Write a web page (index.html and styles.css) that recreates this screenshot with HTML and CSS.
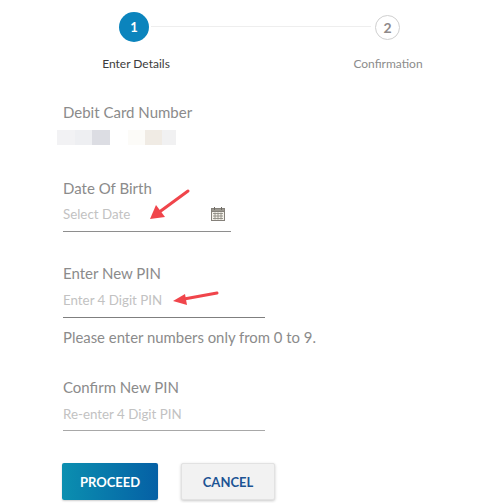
FILE: index.html
```html
<!DOCTYPE html>
<html lang="en">
<head>
<meta charset="utf-8">
<title>Set PIN</title>
<link rel="stylesheet" href="styles.css">
</head>
<body>
<main class="page">
  <div class="stepper">
    <div class="step step-active">
      <div class="dot-slot"><span class="dot dot-on">1</span></div>
      <span class="step-label">Enter Details</span>
    </div>
    <div class="step-line"></div>
    <div class="step step-next">
      <div class="dot-slot"><span class="dot dot-off">2</span></div>
      <span class="step-label">Confirmation</span>
    </div>
  </div>

  <section class="card-field">
    <div class="label">Debit Card Number</div>
    <div class="masked">
      <div class="mask-group">
        <i class="m m1"></i><i class="m m2"></i><i class="m m3"></i>
      </div>
      <div class="mask-group">
        <i class="m m4"></i><i class="m m5"></i><i class="m m6"></i>
      </div>
    </div>
  </section>

  <section class="field field-dob">
    <div class="label">Date Of Birth</div>
    <div class="input input-short">
      <span class="placeholder">Select Date</span>
      <svg class="cal" width="16" height="16" viewBox="0 0 16 16" aria-hidden="true">
        <rect x="1.5" y="2.5" width="13" height="12" fill="#f4f1ea" stroke="#85817a"/>
        <rect x="1.5" y="2.5" width="13" height="3" fill="#9b9890" stroke="#85817a"/>
        <path d="M4.5 1v3M11.500 1v3" stroke="#6f6c66" fill="none"/>
        <path d="M3 7.500h10M3 10h10M3 12.500h10M5 6.500v7M8 6.500v7M11 6.500v7" stroke="#8f8c85" stroke-width=".9" fill="none"/>
      </svg>
      <svg class="arrow arrow-dob" width="44" height="36" viewBox="0 0 44 36" aria-hidden="true">
        <path d="M41 3 11 25" stroke="#f0454b" stroke-width="3" stroke-linecap="round" fill="none"/>
        <path d="M3 31 9 17l9 12z" fill="#f0454b"/>
      </svg>
    </div>
  </section>

  <section class="field field-pin">
    <div class="label">Enter New PIN</div>
    <div class="input input-long">
      <span class="placeholder">Enter 4 Digit PIN</span>
      <svg class="arrow arrow-pin" width="48" height="18" viewBox="0 0 48 18" aria-hidden="true">
        <path d="M46 3 13 9" stroke="#f0454b" stroke-width="3" stroke-linecap="round" fill="none"/>
        <path d="M2 11 14 4l2 11z" fill="#f0454b"/>
      </svg>
    </div>
    <p class="hint">Please enter numbers only from 0 to 9.</p>
  </section>

  <section class="field field-confirm">
    <div class="label">Confirm New PIN</div>
    <div class="input input-long input-light">
      <span class="placeholder">Re-enter 4 Digit PIN</span>
    </div>
  </section>

  <div class="actions">
    <button class="btn btn-primary" type="button">PROCEED</button>
    <button class="btn btn-secondary" type="button">CANCEL</button>
  </div>
</main>
</body>
</html>
```
FILE: styles.css
```css
* { box-sizing: border-box; }
html, body { margin: 0; padding: 0; background: #fff; }
body { font-family: Lato, "Open Sans", sans-serif; color: #8a8a8a; height: 503px; overflow: hidden; }
.page { width: 500px; padding: 12px 0 0 63px; }

.stepper { display: flex; align-items: flex-start; height: 69px; margin-left: 39px; width: 320px; }
.step { width: 68px; flex: none; display: flex; flex-direction: column; align-items: center; }
.dot-slot { height: 30px; display: flex; align-items: center; justify-content: center; margin-bottom: 15px; }
.step-active .dot-slot { margin-right: 4px; }
.step-next .dot-slot { margin-right: 1px; }
.dot { display: flex; align-items: center; justify-content: center; border-radius: 50%; font-weight: 700; }
.dot-on { width: 30px; height: 30px; background: #0b84bd; color: #fff; font-size: 13px; }
.dot-off { width: 25px; height: 25px; border: 1px solid #cfcfcf; color: #8f8a8a; font-size: 14px; background: #fff; }
.step-label { font-size: 12px; line-height: 14px; white-space: nowrap; }
.step-active .step-label { color: #3c3c3c; }
.step-next .step-label { color: #8c8c8c; }
.step-line { flex: 1; height: 1px; margin: 14px -17px 0 -19px; background: #eeeeee; }

.label { font-size: 15px; line-height: 18px; color: #8b8b8b; }
.card-field { margin-top: 22px; }
.masked { display: flex; gap: 18px; margin: 9px 0 0 -6px; }
.mask-group { display: flex; }
.m { display: block; height: 15px; }
.m1 { width: 18px; background: #f2f2f4; }
.m2 { width: 17px; background: #eeeff2; }
.m3 { width: 18px; background: #dcdde3; }
.m4 { width: 17px; background: #fcfbf8; }
.m5 { width: 17px; background: #f0ebe4; }
.m6 { width: 14px; background: #f1f1f2; }

.field-dob { margin-top: 34px; }
.field-pin { margin-top: 32px; }
.field-confirm { margin-top: 32px; }

.input { position: relative; display: flex; align-items: center; justify-content: space-between; border-bottom: 1px solid #8e8e8e; }
.input-short { width: 168px; height: 35px; }
.input-long { width: 202px; height: 36px; padding-top: 1px; border-bottom-color: #7f7f7f; }
.input-light { height: 35px; border-bottom-color: #a8a8a8; }
.placeholder { font-size: 13.333px; color: #c2c2c2; font-weight: 400; }
.cal { margin-right: 5px; }
.arrow { position: absolute; }
.arrow-dob { left: 84px; top: -9px; }
.arrow-pin { left: 108px; top: 8px; }

.hint { margin: 10px 0 0; font-size: 14.900px; line-height: 18px; color: #8b8b8b; }

.actions { display: flex; gap: 23px; margin: 32px 0 0 -1px; }
.btn { height: 37px; border-radius: 2px; font-family: inherit; font-size: 13px; font-weight: 700; padding: 0; cursor: pointer; }
.btn-primary { width: 96px; border: 0; color: #fff; background: linear-gradient(90deg, #0b8fb0, #0560a5); box-shadow: 0 1px 2px rgba(0,0,0,.2); }
.btn-secondary { width: 94px; border: 1px solid #e2e2e2; color: #1d5494; background: #f2f2f2; box-shadow: 0 1px 3px rgba(0,0,0,.22); }
```
